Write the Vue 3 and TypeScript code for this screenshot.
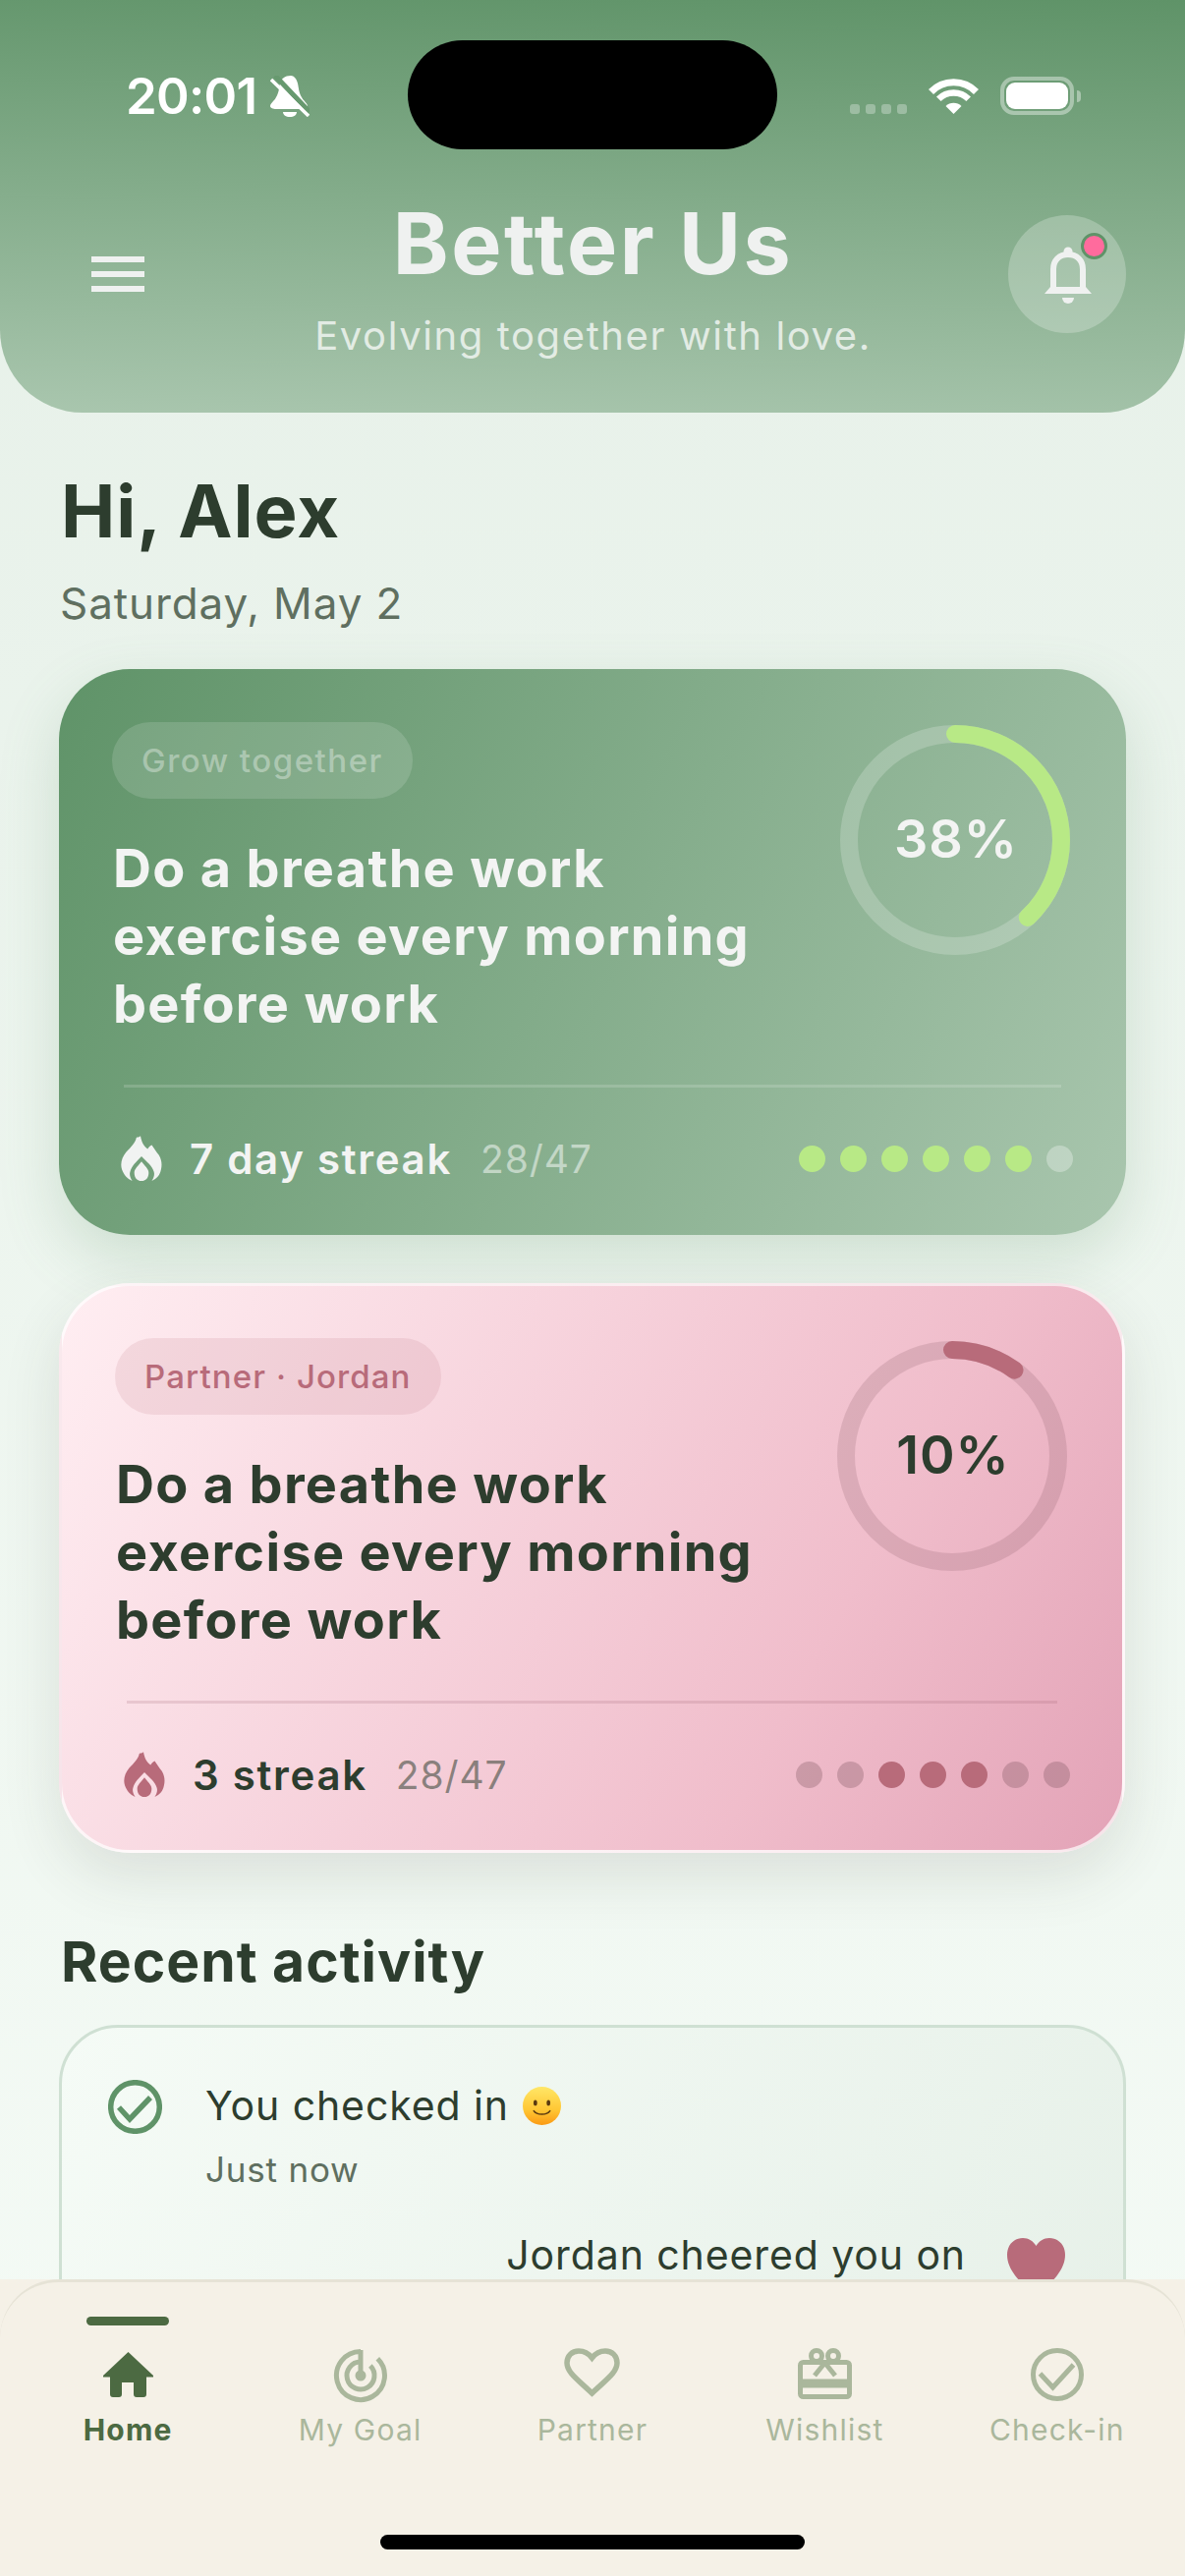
<script setup lang="ts">
interface Card {
  tone: string
  pill: string
  pct: number
  streak: string
  dots: boolean[]
}
const R = 108
const circ = 2 * Math.PI * R
const cards: Card[] = [
  { tone: 'green', pill: 'Grow together', pct: 38, streak: '7 day streak', dots: [true, true, true, true, true, true, false] },
  { tone: 'pink', pill: 'Partner · Jordan', pct: 10, streak: '3 streak', dots: [false, false, true, true, true, false, false] },
]
const dash = (p: number) => `${(circ * p) / 100} ${circ}`
const tabs = ['Home', 'My Goal', 'Partner', 'Wishlist', 'Check-in']
</script>

<template>
  <div class="screen">
    <header class="header">
      <div class="island"></div>
      <div class="status">
        <div class="status-left">
          <span class="time">20:01</span>
          <svg class="muted" viewBox="0 0 40 42" width="40" height="42">
            <path d="M21 0c3 0 6 3 7 8 1 4 1 9 4 14 2 4 6 6 6 9 0 2-2 3-4 3H6c-3 0-6-1-6-3 0-3 4-5 6-9 3-5 3-10 4-14 1-5 5-8 11-8z" fill="#fff" />
            <path d="M13 37h14c0 3-3 5-7 5s-7-2-7-5z" fill="#fff" />
            <path d="M5 0l35 37" stroke="#67996f" stroke-width="5" />
            <path d="M1 4l38 37" stroke="#fff" stroke-width="3.4" />
          </svg>
        </div>
        <div class="status-right">
          <div class="signal"><i></i><i></i><i></i><i></i></div>
          <svg viewBox="0 0 51 37" width="51" height="37" fill="none" stroke="#fff">
            <path d="M25.500 37L17.500 29A11.300 11.300 0 0 1 33.500 29Z" fill="#fff" stroke="none" />
            <path d="M10.300 21.800A21.500 21.500 0 0 1 40.700 21.800" stroke-width="6.500" />
            <path d="M2.500 14.500A32 32 0 0 1 48.500 14.500" stroke-width="7" />
          </svg>
          <div class="battery"><div class="battery-fill"></div></div>
        </div>
      </div>
      <div class="top-row">
        <div class="burger"><i></i><i></i><i></i></div>
        <div class="brand">
          <h1>Better Us</h1>
          <p>Evolving together with love.</p>
        </div>
        <div class="bell-btn">
          <svg viewBox="0 0 48 58" width="48" height="58">
            <circle cx="24" cy="5" r="4.500" fill="#eff1f0" />
            <path d="M9 43V23C9 14 15 8 24 8s15 6 15 15v20" fill="none" stroke="#eff1f0" stroke-width="6" />
            <path d="M0 48l6-7h36l6 7z" fill="#eff1f0" />
            <path d="M18 52h12a6 6 0 0 1-12 0z" fill="#eff1f0" />
          </svg>
          <span class="badge"></span>
        </div>
      </div>
    </header>

    <main class="main">
      <h2 class="hi">Hi, Alex</h2>
      <p class="date">Saturday, May 2</p>

      <section v-for="c in cards" :key="c.tone" class="card" :class="c.tone">
        <div class="card-top">
          <div class="card-copy">
            <span class="pill">{{ c.pill }}</span>
            <h3>Do a breathe work<br />exercise every morning<br />before work</h3>
          </div>
          <div class="ring">
            <svg viewBox="0 0 234 234" width="234" height="234">
              <circle class="track" cx="117" cy="117" :r="R" />
              <circle class="prog" cx="117" cy="117" :r="R" :stroke-dasharray="dash(c.pct)" transform="rotate(-90 117 117)" />
            </svg>
            <span class="pct">{{ c.pct }}%</span>
          </div>
        </div>
        <div class="rule"></div>
        <div class="foot">
          <svg class="flame" viewBox="0 0 40 44" width="42" height="46">
            <path fill-rule="evenodd" d="M19 0c1 6 3 10 7 13 1-2 2-3 4-4 2 3 4 6 7 10 3 5 3 10 2 14-1 5-4 9-9 11 2-3 3-6 2-9-1-5-7-10-12-15-5 5-10 10-11 15-1 3 0 6 2 9-5-2-8-6-10-11-2-6 0-12 4-17 5-5 9-9 10-14 1-1 3 0 4-2zM20 25c3 4 7 7 7 11 0 5-3 8-7 8s-7-3-7-8c0-4 4-7 7-11z" />
          </svg>
          <span class="streak">{{ c.streak }}</span>
          <span class="count">28/47</span>
          <div class="dots">
            <i v-for="(on, i) in c.dots" :key="i" :class="{ on }"></i>
          </div>
        </div>
      </section>

      <h2 class="recent">Recent activity</h2>
      <section class="activity">
        <div class="row">
          <svg viewBox="0 0 55 55" width="55" height="55" fill="none" stroke="#5f9368" stroke-width="5.500">
            <circle cx="27.500" cy="27.500" r="24.800" />
            <path d="M11 28l11 12 21-22" />
          </svg>
          <div class="row-text">
            <div class="row-title">
              You checked in
              <svg viewBox="0 0 38 38" width="39" height="39">
                <defs>
                  <linearGradient id="emo" x1="0" y1="0" x2="0" y2="1">
                    <stop offset="0" stop-color="#ffe768" />
                    <stop offset="0.6" stop-color="#ffc734" />
                    <stop offset="1" stop-color="#fb9a14" />
                  </linearGradient>
                </defs>
                <circle cx="19" cy="19" r="19" fill="url(#emo)" />
                <ellipse cx="12.500" cy="16" rx="1.800" ry="2.800" fill="#5a3a10" />
                <ellipse cx="25.500" cy="16" rx="1.800" ry="2.800" fill="#5a3a10" />
                <path d="M11 24c3 4.500 13 4.500 16 0" fill="none" stroke="#5a3a10" stroke-width="1.500" stroke-linecap="round" />
              </svg>
            </div>
            <div class="row-sub">Just now</div>
          </div>
        </div>
        <div class="row-right">
          <span>Jordan cheered you on</span>
          <svg viewBox="0 0 59 60" width="59" height="60">
            <path d="M29.500 60C12 44 0 32 0 17 0 7 7 0 16 0c6 0 10.500 3 13.500 8C32.500 3 37 0 43 0c9 0 16 7 16 17 0 15-12 27-29.500 43z" fill="#b86b7a" />
          </svg>
        </div>
      </section>
    </main>

    <nav class="nav">
      <div class="nav-inner">
        <div v-for="(t, i) in tabs" :key="t" class="tab" :class="{ active: i === 0 }">
          <span v-if="i === 0" class="indicator"></span>
          <svg v-if="i === 0" viewBox="0 0 51 46" width="51" height="46">
            <path d="M25.500 0L51 24v1.500H44V43a3 3 0 0 1-3 3h-7a3 3 0 0 1-3-3V31H19v12a3 3 0 0 1-3 3H10a3 3 0 0 1-3-3V25.500H0V24z" fill="#4c6a42" />
          </svg>
          <svg v-else-if="i === 1" viewBox="-28 -28 56 56" width="56" height="56" fill="none" stroke="#aab79c" stroke-width="5">
            <path d="M0-24.500A24.500 24.500 0 1 0 17.300-17.300" />
            <path d="M0-14A14 14 0 1 0 9.900-9.900" />
            <path d="M0 0V-26" />
            <circle r="5.500" fill="#aab79c" stroke="none" />
          </svg>
          <svg v-else-if="i === 2" viewBox="0 0 57 50" width="57" height="50" fill="none" stroke="#aab79c" stroke-width="5.500">
            <path d="M28.500 46C14 32 3 25 3 15 3 8 8 3 15 3c6 0 10 2.500 13.500 7C32 5.500 36 3 42 3c7 0 12 5 12 12 0 10-11 17-25.500 31z" />
          </svg>
          <svg v-else-if="i === 3" viewBox="0 0 55 52" width="55" height="52" fill="none" stroke="#aab79c" stroke-width="5">
            <rect x="2.500" y="14.500" width="50" height="35" rx="3" />
            <path d="M0 36h55" stroke-width="9" />
            <circle cx="19" cy="8" r="5.500" />
            <circle cx="36" cy="8" r="5.500" />
            <path d="M27.500 15L17 28M27.500 15L38 28" />
          </svg>
          <svg v-else viewBox="0 0 54 54" width="54" height="54" fill="none" stroke="#aab79c" stroke-width="5">
            <circle cx="27" cy="27" r="24.500" />
            <path d="M9.500 26l13 14 21-23" />
          </svg>
          <span class="tab-label">{{ t }}</span>
        </div>
      </div>
      <div class="home-bar"></div>
    </nav>
  </div>
</template>

<style scoped>
* { box-sizing: border-box; }
.screen {
  position: relative;
  width: 1206px;
  height: 2622px;
  overflow: hidden;
  font-family: Inter, "Noto Sans", sans-serif;
  background: linear-gradient(180deg, #e6f0e8 0%, #f5fbf6 100%);
  color: #2d3d2e;
}
.header {
  position: relative;
  height: 420px;
  border-radius: 0 0 84px 84px;
  background: linear-gradient(182deg, #5f9368 0%, #a9c6ae 100%);
  padding-top: 77px;
}
.island {
  position: absolute;
  left: 415px;
  top: 41px;
  width: 376px;
  height: 111px;
  border-radius: 56px;
  background: #000;
}
.status {
  display: flex;
  justify-content: space-between;
  align-items: flex-start;
  height: 42px;
  padding: 0 113px 0 128px;
}
.status-left { display: flex; align-items: center; gap: 14px; }
.time {
  font-size: 51px;
  line-height: 42px;
  font-weight: 600;
  color: #fff;
  letter-spacing: -.7px;
}
.status-right { display: flex; align-items: flex-start; }
.signal { display: flex; gap: 6px; margin: 29px 22px 0 0; }
.signal i { width: 10px; height: 10px; border-radius: 3px; background: rgba(255,255,255,.3); }
.status-right svg { margin-top: 2px; }
.battery {
  position: relative;
  width: 75px;
  height: 39px;
  margin-left: 22px;
  margin-top: 1px;
  padding: 2px;
  border: 4px solid rgba(255,255,255,.4);
  border-radius: 14px;
}
.battery::after {
  content: "";
  position: absolute;
  right: -11px;
  top: 10px;
  width: 4px;
  height: 12px;
  border-radius: 0 4px 4px 0;
  background: rgba(255,255,255,.4);
}
.battery-fill { width: 100%; height: 100%; background: #fff; border-radius: 9px; }
.top-row {
  display: grid;
  grid-template-columns: 120px 1fr 120px;
  align-items: start;
  padding: 0 60px 0 93px;
  margin-top: 100px;
}
.burger { display: flex; flex-direction: column; gap: 9px; margin-top: 42px; }
.burger i { width: 54px; height: 6px; background: #eff1f0; }
.brand { text-align: center; margin-left: -32px; margin-top: -14px; }
.brand h1 {
  margin: 0;
  font-size: 86px;
  line-height: 86px;
  font-weight: 700;
  letter-spacing: 2.5px;
  color: #eff1f0;
}
.brand p {
  margin: 27px 0 0;
  font-size: 40px;
  line-height: 48px;
  letter-spacing: 1.6px;
  color: rgba(255,255,255,.72);
}
.bell-btn {
  position: relative;
  width: 120px;
  height: 120px;
  border-radius: 50%;
  background: rgba(255,255,255,.24);
  display: flex;
  align-items: center;
  justify-content: center;
}
.bell-btn svg { margin-top: 2px; margin-left: 1px; }
.badge {
  position: absolute;
  left: 74px;
  top: 17.500px;
  width: 27px;
  height: 27px;
  border-radius: 50%;
  background: #ff6b9d;
  border: 3px solid #5f9368;
}
.main { padding: 0 60px; }
.hi {
  margin: 61px 0 0 2px;
  font-size: 74px;
  line-height: 78px;
  font-weight: 700;
  letter-spacing: 1px;
}
.date {
  margin: 28px 0 0 1px;
  font-size: 44px;
  line-height: 54px;
  letter-spacing: .9px;
  color: #5f6f60;
}
.card {
  position: relative;
  height: 576px;
  margin-top: 40px;
  padding: 54px 54px 0;
  border-radius: 72px;
}
.card.green {
  background: linear-gradient(118deg, #5f9368 0%, #a9c6ae 100%);
  box-shadow: 0 24px 60px rgba(95,147,104,.22);
  color: #f3f4f3;
}
.card.pink {
  width: 1085px;
  height: 580px;
  margin-top: 49px;
  background: linear-gradient(118deg, #ffeef2 0%, #f0bdcb 70%, #e3a3b7 100%);
  border: 3px solid rgba(255,255,255,.7);
  box-shadow: 0 24px 60px rgba(60,60,50,.12);
  padding: 53px 54px 0 54px;
}
.card-top { display: flex; justify-content: space-between; height: 369px; }
.card-copy { display: flex; flex-direction: column; align-items: flex-start; }
.pill {
  height: 78px;
  line-height: 78px;
  padding: 0 30px;
  border-radius: 39px;
  font-size: 33px;
  font-weight: 500;
  letter-spacing: 1.5px;
  background: rgba(255,255,255,.14);
  color: rgba(255,255,255,.36);
}
.pink .pill { background: rgba(184,107,122,.14); color: #b86b7a; letter-spacing: 1.1px; }
h3 {
  margin: 36px 0 0 1px;
  font-size: 54px;
  line-height: 69px;
  font-weight: 700;
  letter-spacing: 1.3px;
}
.ring { position: relative; width: 234px; height: 234px; margin: 3px 3px 0 0; }
.pink .ring { margin: 3px 2px 0 0; }
.ring svg { display: block; fill: none; }
.track { stroke: rgba(255,255,255,.2); stroke-width: 18; }
.prog { stroke: #b8e986; stroke-width: 18; stroke-linecap: round; }
.pink .track { stroke: rgba(120,80,90,.18); }
.pink .prog { stroke: #b86b7a; }
.pct {
  position: absolute;
  inset: 0;
  display: flex;
  align-items: center;
  justify-content: center;
  padding: 0 0 3px 2px;
  font-size: 54px;
  font-weight: 600;
  letter-spacing: 1px;
}
.rule { height: 3px; margin: 0 12px; background: rgba(255,255,255,.16); }
.pink .rule { background: rgba(150,90,105,.18); }
.foot { display: flex; align-items: center; height: 50px; margin-top: 47px; padding-left: 9px; }
.flame { fill: #f1f3f2; }
.pink .flame { fill: #b86b7a; }
.streak { margin-left: 28px; font-size: 42px; font-weight: 600; letter-spacing: 1.7px; }
.count { margin-left: 29px; font-size: 39px; letter-spacing: .9px; color: rgba(255,255,255,.5); }
.pink .count { color: rgba(45,61,46,.55); }
.dots { display: flex; gap: 15px; margin-left: auto; }
.pink .dots { margin-right: -1px; }
.dots i { width: 27px; height: 27px; border-radius: 50%; background: rgba(255,255,255,.3); }
.dots i.on { background: #b8e986; }
.pink .dots i { background: rgba(120,80,90,.3); }
.pink .dots i.on { background: #b86b7a; }
.recent {
  margin: 78px 0 0 2px;
  font-size: 57px;
  line-height: 66px;
  font-weight: 700;
  letter-spacing: 1px;
}
.activity {
  height: 500px;
  margin-top: 31px;
  padding: 53px 0 0 47px;
  border: 3px solid #cfe0d3;
  border-radius: 60px;
  background: linear-gradient(118deg, #f5fbf6 0%, #e6f0e8 100%);
}
.row { display: flex; gap: 44px; }
.row-text { margin-top: -1px; }
.row-title { display: flex; align-items: center; gap: 14px; font-size: 41px; line-height: 54px; letter-spacing: .9px; }
.row-sub { margin-top: 16px; font-size: 35px; line-height: 44px; letter-spacing: .8px; color: #5f6f60; }
.row-right {
  display: flex;
  justify-content: flex-end;
  gap: 42px;
  margin-top: 38px;
  padding-right: 59px;
  font-size: 41px;
  line-height: 54px;
  letter-spacing: .9px;
}
.row-right svg { margin-top: 10px; }
.nav {
  position: absolute;
  left: 0;
  right: 0;
  bottom: 0;
  height: 302px;
  background: #f5f1e7;
}
.nav-inner {
  display: grid;
  grid-template-columns: repeat(5, 1fr);
  height: 260px;
  padding: 0 12px;
  border-top: 3px solid #e6e3d6;
  border-radius: 60px 60px 0 0;
}
.tab { position: relative; display: flex; flex-direction: column; align-items: center; justify-content: flex-end; height: 170px; color: #aab79c; }
.tab svg { position: absolute; top: 67px; }
.tab.active svg { top: 71px; }
.tab-label { font-size: 30px; line-height: 40px; letter-spacing: 1.2px; }
.tab.active .tab-label { font-weight: 700; color: #4c6a42; }
.indicator { position: absolute; top: 35px; width: 84px; height: 9px; border-radius: 5px; background: #4c6a42; }
.home-bar { width: 432px; height: 15px; margin: 0 auto; border-radius: 8px; background: #000; }
</style>
